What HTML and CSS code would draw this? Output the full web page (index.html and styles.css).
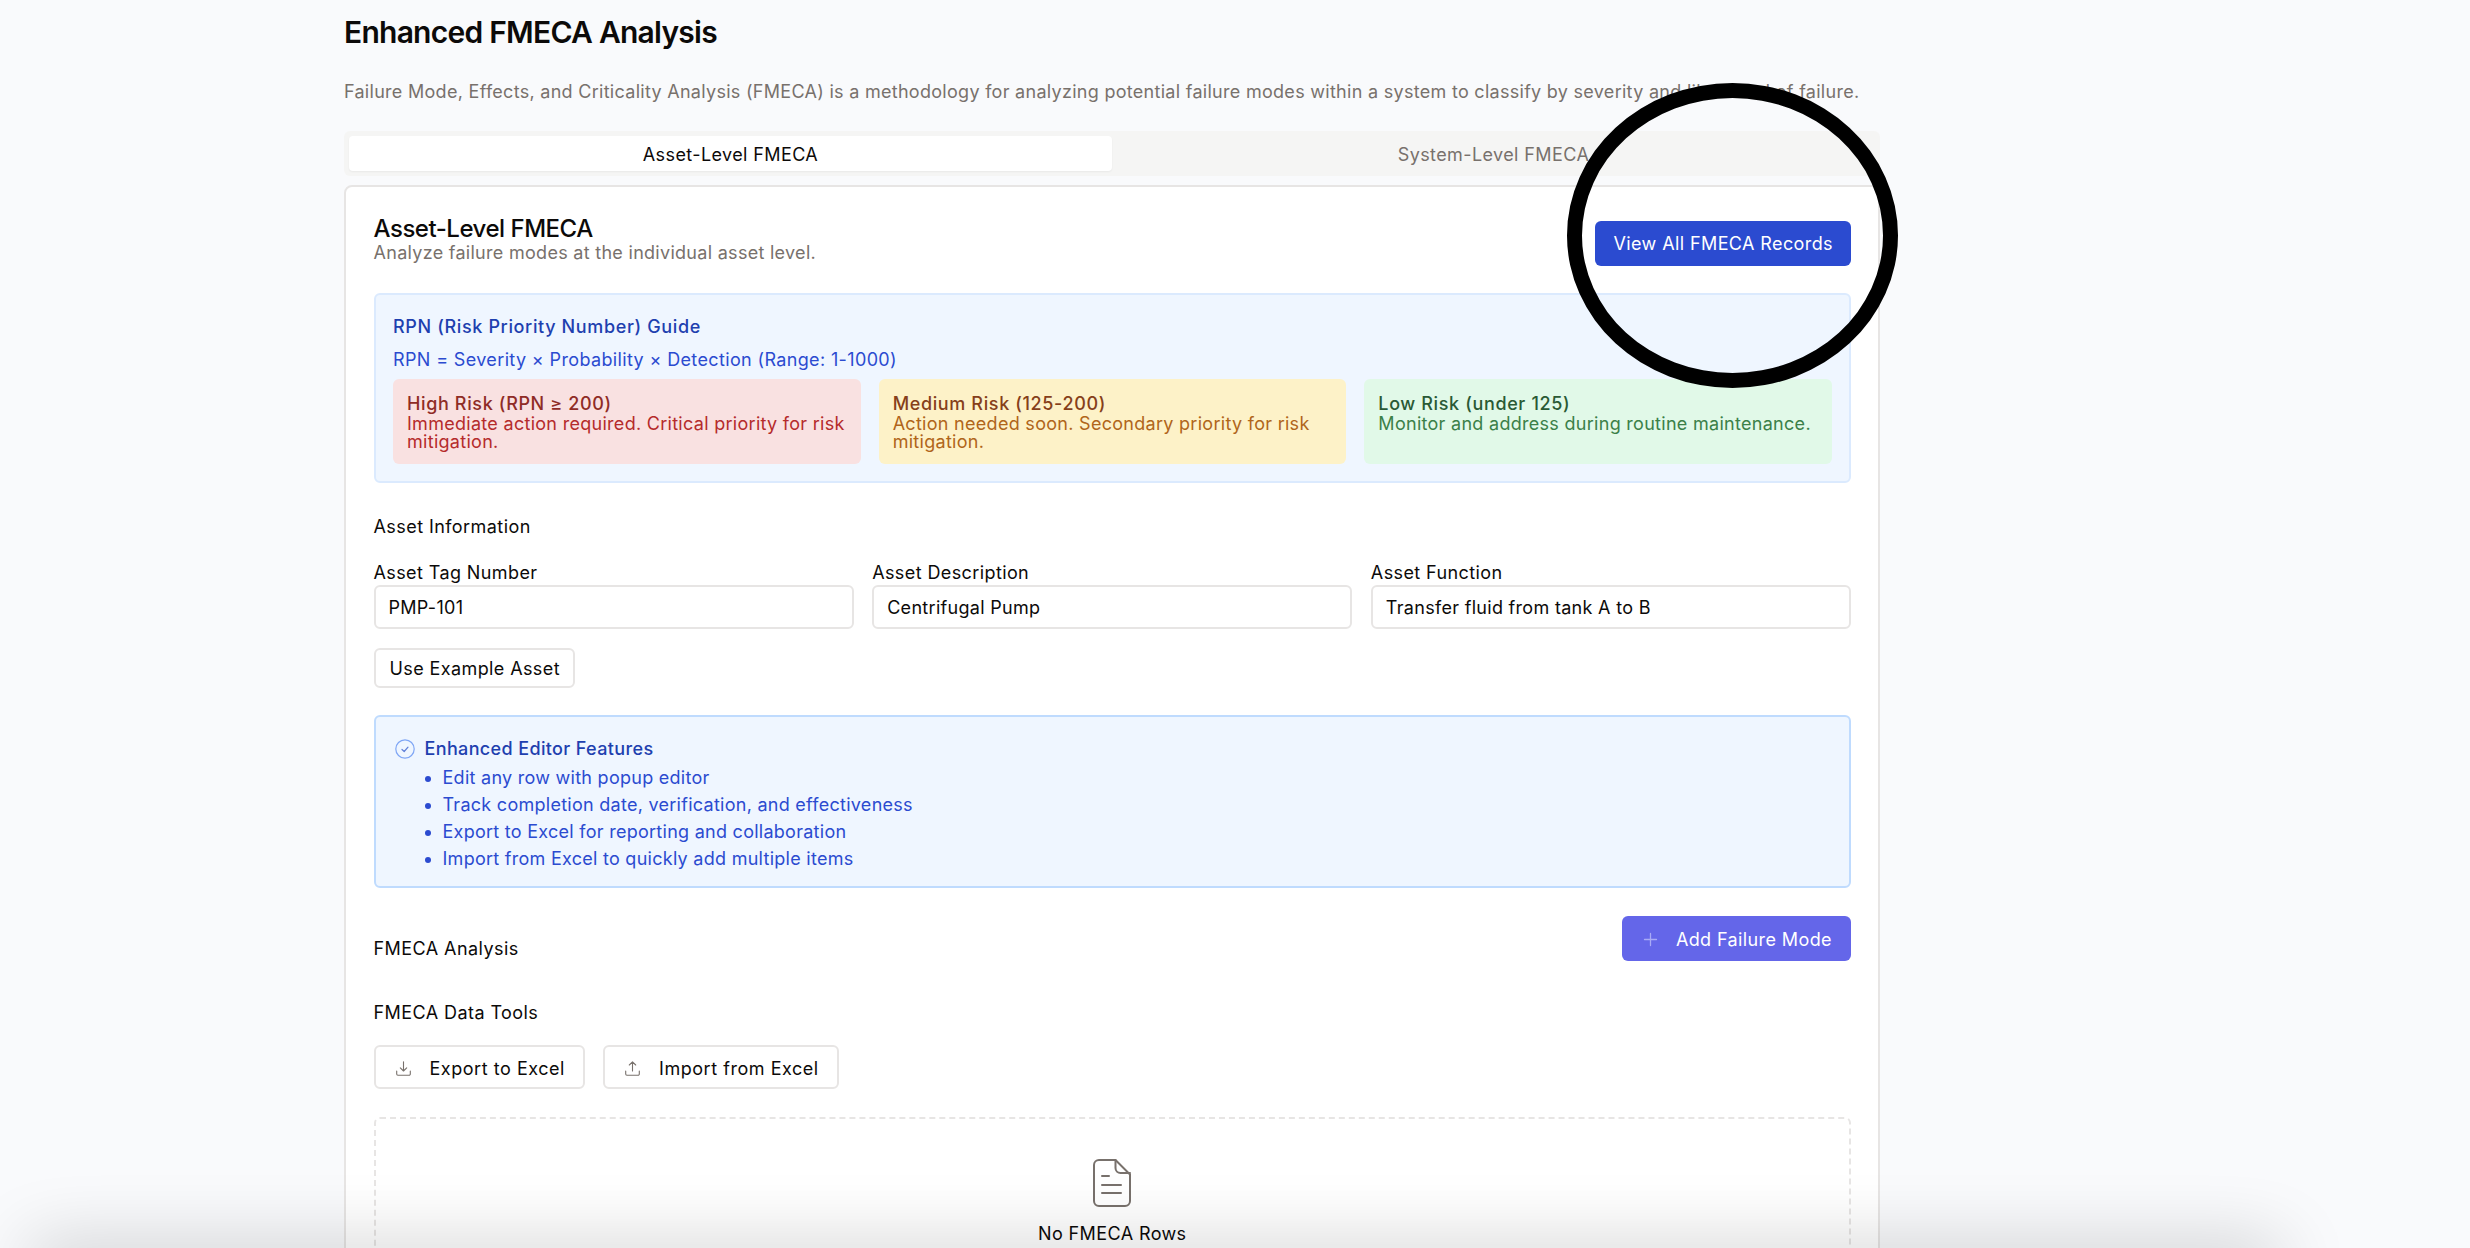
FILE: index.html
```html
<!DOCTYPE html>
<html lang="en">

<head>
    <meta charset="UTF-8">
    <meta name="viewport" content="width=device-width, initial-scale=1.0">
    <title>Enhanced FMECA Analysis</title>
    <link rel="stylesheet" href="styles.css">
</head>

<body>
    <main class="page">
        <h1>Enhanced FMECA Analysis</h1>
        <p class="page-desc">Failure Mode, Effects, and Criticality Analysis (FMECA) is a methodology for analyzing potential failure modes within a system to classify by severity and likelihood of failure.</p>

        <div class="tabs">
            <button class="tab tab-active">Asset-Level FMECA</button>
            <button class="tab">System-Level FMECA</button>
        </div>

        <section class="card">
            <div class="card-head">
                <div class="card-title">
                    <h2>Asset-Level FMECA</h2>
                    <p>Analyze failure modes at the individual asset level.</p>
                </div>
                <button class="btn btn-blue">View All FMECA Records</button>
            </div>

            <div class="guide">
                <h3>RPN (Risk Priority Number) Guide</h3>
                <p class="formula">RPN = Severity × Probability × Detection (Range: 1-1000)</p>
                <div class="risk-grid">
                    <div class="risk risk-high">
                        <h4>High Risk (RPN ≥ 200)</h4>
                        <p>Immediate action required. Critical priority for risk mitigation.</p>
                    </div>
                    <div class="risk risk-medium">
                        <h4>Medium Risk (125-200)</h4>
                        <p>Action needed soon. Secondary priority for risk mitigation.</p>
                    </div>
                    <div class="risk risk-low">
                        <h4>Low Risk (under 125)</h4>
                        <p>Monitor and address during routine maintenance.</p>
                    </div>
                </div>
            </div>

            <h3 class="section-title asset-title">Asset Information</h3>
            <div class="field-grid">
                <div class="field">
                    <label for="tag">Asset Tag Number</label>
                    <input type="text" id="tag" value="PMP-101">
                </div>
                <div class="field">
                    <label for="description">Asset Description</label>
                    <input type="text" id="description" value="Centrifugal Pump">
                </div>
                <div class="field">
                    <label for="function">Asset Function</label>
                    <input type="text" id="function" value="Transfer fluid from tank A to B">
                </div>
            </div>
            <button class="btn btn-outline btn-example">Use Example Asset</button>

            <div class="features">
                <div class="features-title">
                    <svg class="check-icon" viewBox="0 0 20 20" fill="none">
                        <circle cx="10" cy="10" r="9.2" stroke="#7fa6f5" stroke-width="1.2" />
                        <path d="M7 10.5l2.2 2 3.8-4.4" stroke="#5f7fd8" stroke-width="1.2" stroke-linecap="round" stroke-linejoin="round" />
                    </svg>
                    <span>Enhanced Editor Features</span>
                </div>
                <ul>
                    <li>Edit any row with popup editor</li>
                    <li>Track completion date, verification, and effectiveness</li>
                    <li>Export to Excel for reporting and collaboration</li>
                    <li>Import from Excel to quickly add multiple items</li>
                </ul>
            </div>

            <div class="analysis-row">
                <h3 class="section-title">FMECA Analysis</h3>
                <button class="btn btn-indigo">
                    <svg class="btn-icon" viewBox="0 0 15 15" fill="none">
                        <path d="M7.5 1.5v12M1.5 7.5h12" stroke="#a9abf5" stroke-width="1.3" stroke-linecap="round" />
                    </svg>
                    Add Failure Mode
                </button>
            </div>

            <h3 class="section-title tools-title">FMECA Data Tools</h3>
            <div class="tools">
                <button class="btn btn-outline btn-tool">
                    <svg class="btn-icon" viewBox="0 0 15 15" fill="none">
                        <path d="M7.5 0.8v9M4.3 6.8l3.2 3.2 3.2-3.2M0.7 10v3a1.2 1.2 0 0 0 1.2 1.2h11.2a1.2 1.2 0 0 0 1.2-1.2v-3" stroke="#78716c" stroke-width="1.1" stroke-linecap="round" stroke-linejoin="round" />
                    </svg>
                    Export to Excel
                </button>
                <button class="btn btn-outline btn-tool">
                    <svg class="btn-icon" viewBox="0 0 15 15" fill="none">
                        <path d="M7.5 10V0.8M4.3 4l3.2-3.2L10.700 4M0.7 10v3a1.2 1.2 0 0 0 1.2 1.2h11.2a1.2 1.2 0 0 0 1.2-1.2v-3" stroke="#78716c" stroke-width="1.1" stroke-linecap="round" stroke-linejoin="round" />
                    </svg>
                    Import from Excel
                </button>
            </div>

            <div class="empty">
                <svg class="file-icon" viewBox="0 0 38 48" fill="none">
                    <path d="M6 1h16.500L37 15.500V42a5 5 0 0 1-5 5H6a5 5 0 0 1-5-5V6a5 5 0 0 1 5-5z" stroke="#78716c" stroke-width="2" stroke-linejoin="round" />
                    <path d="M22.500 1v8a5 5 0 0 0 5 5H37M9 17h7M9 26h19M9 34h19" stroke="#78716c" stroke-width="2" stroke-linecap="round" stroke-linejoin="round" />
                </svg>
                <p>No FMECA Rows</p>
            </div>
        </section>
    </main>

    <!-- annotation drawn over the screenshot -->
    <div class="highlight"></div>
    <div class="window-shadow"></div>
</body>

</html>
```

FILE: styles.css
```css
* {
    box-sizing: border-box;
}

html,
body {
    height: 100%;
    margin: 0;
    overflow: hidden;
}

body {
    background-color: #f9fafc;
    color: #0c0a09;
    font-family: Inter, "Noto Sans", sans-serif;
    font-size: 18px;
    letter-spacing: 0.02em;
    position: relative;
}

h1,
h2,
h3,
h4,
p,
ul {
    margin: 0;
    padding: 0;
    font-size: inherit;
    font-weight: 400;
}

button,
input {
    font-family: inherit;
    font-size: inherit;
    letter-spacing: inherit;
}

.page {
    width: 1536px;
    margin-left: 344px;
    padding-top: 14px;
}

h1 {
    font-size: 30px;
    font-weight: 600;
    line-height: 36px;
    letter-spacing: -0.025em;
}

.page-desc {
    margin-top: 28px;
    color: #78716c;
    line-height: 28px;
    letter-spacing: 0.016em;
    white-space: nowrap;
}

/* tabs */
.tabs {
    display: grid;
    grid-template-columns: 1fr 1fr;
    height: 45px;
    margin-top: 25px;
    padding: 5px;
    background-color: #f5f5f4;
    border-radius: 6px;
}

.tab {
    padding: 2px 0 0;
    border: none;
    background: none;
    color: #78716c;
    letter-spacing: 0.022em;
    border-radius: 4px;
}

.tab-active {
    background-color: #fff;
    color: #0c0a09;
    box-shadow: 0 1px 2px rgba(0, 0, 0, 0.05);
}

/* card */
.card {
    margin-top: 9px;
    padding: 28px 27px 28px 27.5px;
    background-color: #fff;
    border: 2px solid #e7e5e4;
    border-radius: 8px;
}

.card-head {
    display: flex;
    justify-content: space-between;
    align-items: center;
    margin-bottom: 21px;
}

.card-title {
    padding-bottom: 8px;
}

.card-title h2 {
    padding-top: 1px;
    font-size: 24px;
    font-weight: 500;
    line-height: 26px;
    letter-spacing: -0.02em;
}

.card-title p {
    color: #78716c;
    line-height: 22px;
    letter-spacing: 0.016em;
}

/* buttons */
.btn {
    display: inline-flex;
    align-items: center;
    border-radius: 6px;
    letter-spacing: 0.022em;
    white-space: nowrap;
}

.btn-icon {
    width: 15px;
    height: 15px;
    flex-shrink: 0;
    margin-right: 19px;
}

.btn-blue {
    height: 45px;
    padding: 0 18px;
    background-color: #2b4bd0;
    border: none;
    color: #fff;
}

.btn-indigo {
    height: 45px;
    padding: 2px 19px 0 20.5px;
    background-color: #6466e9;
    border: none;
    color: #fff;
}

.btn-indigo .btn-icon {
    margin-right: 18px;
}

.btn-outline {
    background-color: #fff;
    border: 2px solid #e7e5e4;
    color: #0c0a09;
}

.btn-example {
    height: 40px;
    margin-top: 19px;
    padding: 0 13px 0 14px;
}

.btn-tool {
    height: 44px;
    padding: 2px 18px 0 20px;
    letter-spacing: 0.03em;
}

/* rpn guide */
.guide {
    padding: 21px 17px 17px 17.5px;
    background-color: #eff6ff;
    border: 2px solid #dbeafe;
    border-radius: 6px;
}

.guide h3 {
    color: #1e40af;
    font-weight: 500;
    line-height: 22px;
    letter-spacing: 0.035em;
}

.formula {
    margin-top: 11px;
    color: #2b4bd0;
    line-height: 22px;
}

.risk-grid {
    display: grid;
    grid-template-columns: repeat(3, 1fr);
    gap: 18px;
    margin-top: 8px;
}

.risk {
    height: 85px;
    padding: 14px 8px 13px 14px;
    border-radius: 6px;
}

.risk h4 {
    font-weight: 500;
    line-height: 22px;
    letter-spacing: 0.035em;
}

.risk p {
    line-height: 18px;
    letter-spacing: 0.016em;
}

.risk-high {
    background-color: #f9e1e1;
}

.risk-high h4 {
    color: #8f2c26;
}

.risk-high p {
    color: #b52b2b;
}

.risk-medium {
    background-color: #fdf2c8;
}

.risk-medium h4 {
    color: #86401a;
}

.risk-medium p {
    color: #b0651a;
}

.risk-low {
    background-color: #e1f9e8;
}

.risk-low h4 {
    color: #2a5a35;
}

.risk-low p {
    color: #3b8048;
}

/* asset form */
.section-title {
    line-height: 22px;
    letter-spacing: 0.024em;
}

.asset-title {
    margin-top: 33px;
}

.field-grid {
    display: grid;
    grid-template-columns: repeat(3, 1fr);
    gap: 18.500px;
    margin-top: 25px;
}

.field label {
    display: block;
    margin-bottom: 2px;
    line-height: 20px;
    letter-spacing: 0.022em;
}

.field input {
    width: 100%;
    height: 44px;
    padding: 0 13px;
    background-color: #fff;
    border: 2px solid #e7e5e4;
    border-radius: 6px;
    color: #0c0a09;
    letter-spacing: 0.017em;
}

/* feature list */
.features {
    margin-top: 27px;
    padding: 20.5px 19px 14px;
    background-color: #eff6ff;
    border: 2px solid #bfdbfe;
    border-radius: 6px;
    color: #2b4bd0;
}

.features-title {
    display: flex;
    align-items: center;
    gap: 10px;
    height: 22px;
    color: #1e40af;
    font-weight: 500;
}

.check-icon {
    width: 20px;
    height: 20px;
}

.features ul {
    margin-top: 4.5px;
    padding-left: 48px;
    letter-spacing: 0.015em;
}

.features li {
    line-height: 27px;
}

/* analysis */
.analysis-row {
    display: flex;
    justify-content: space-between;
    align-items: flex-end;
    margin-top: 28px;
}

.analysis-row .section-title {
    padding-bottom: 1px;
}

.tools-title {
    margin-top: 41px;
}

.tools {
    display: flex;
    gap: 18px;
    margin-top: 21px;
}

/* empty state */
.empty {
    margin-top: 28px;
    padding: 40px 0;
    border: 2px dashed #e7e5e4;
    border-radius: 6px;
    text-align: center;
}

.file-icon {
    display: block;
    width: 38px;
    height: 48px;
    margin: 0 auto;
}

.empty p {
    margin-top: 16px;
    line-height: 22px;
    letter-spacing: 0.022em;
}

/* overlays */
.highlight {
    position: absolute;
    left: 1567px;
    top: 83px;
    width: 331px;
    height: 305px;
    border: 15.500px solid #000;
    border-radius: 50%;
}

.window-shadow {
    position: absolute;
    left: 40px;
    right: 200px;
    top: 1256px;
    height: 20px;
    box-shadow: 0 0 70px 10px rgba(0, 0, 0, 0.22);
}
```
